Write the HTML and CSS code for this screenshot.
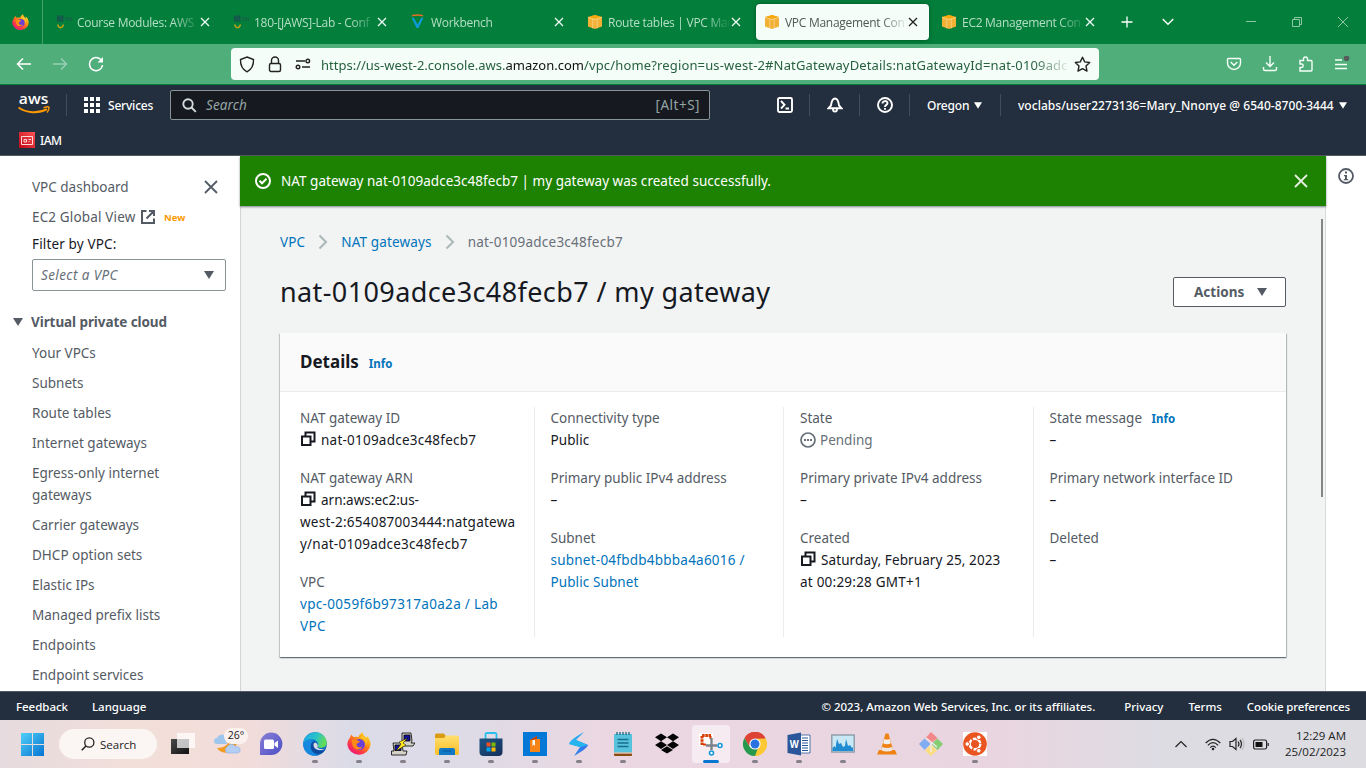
FILE: index.html
```html
<!DOCTYPE html>
<html lang="en">
<head>
<meta charset="utf-8">
<title>VPC Management Console</title>
<link rel="stylesheet" href="styles.css">
</head>
<body>
<svg class="defs" width="0" height="0">
  <defs>
    <linearGradient id="winG" x1="0" y1="0" x2="1" y2="1"><stop offset="0" stop-color="#4fd0fa"/><stop offset="1" stop-color="#0673d0"/></linearGradient>
    <linearGradient id="ffG" x1="1" y1="0" x2="0.2" y2="1"><stop offset="0" stop-color="#fff14a"/><stop offset="0.4" stop-color="#ff980e"/><stop offset="0.75" stop-color="#ff3647"/><stop offset="1" stop-color="#e31587"/></linearGradient>
    <linearGradient id="edgeG" x1="0" y1="0" x2="1" y2="0.3"><stop offset="0" stop-color="#1ba4e8"/><stop offset="0.6" stop-color="#2cc3c8"/><stop offset="1" stop-color="#61dc58"/></linearGradient>
    <linearGradient id="meetG" x1="0" y1="0" x2="1" y2="1"><stop offset="0" stop-color="#8b80d8"/><stop offset="1" stop-color="#4b4fc4"/></linearGradient>
    <linearGradient id="folG" x1="0" y1="0" x2="0" y2="1"><stop offset="0" stop-color="#ffdf70"/><stop offset="1" stop-color="#f9bd25"/></linearGradient>
    <linearGradient id="sG" x1="0" y1="0" x2="1" y2="1"><stop offset="0" stop-color="#28d2f2"/><stop offset="1" stop-color="#3a55e8"/></linearGradient>
    <linearGradient id="storeG" x1="0" y1="0" x2="1" y2="1"><stop offset="0" stop-color="#1e5687"/><stop offset="1" stop-color="#142f58"/></linearGradient>
    <linearGradient id="darkG" x1="0" y1="0" x2="1" y2="1"><stop offset="0" stop-color="#4a4a4a"/><stop offset="1" stop-color="#111"/></linearGradient>
    <linearGradient id="iamG" x1="0" y1="1" x2="1" y2="0"><stop offset="0" stop-color="#bd0816"/><stop offset="1" stop-color="#ff5252"/></linearGradient>
    <symbol id="firefox" viewBox="0 0 24 24">
      <path d="M2 7C3 6 3.300 4 4.600 2.400C5 4 6 4.600 7.500 5.200C9 4.700 10 4.800 11.500 5.200C12 3 13.600 1.400 15.600.3C15.800 3 18 4.500 19.600 5.700C20 5 20 4.300 20.300 4C22 6 23.600 9 23.600 12.600A11.700 11.400 0 0 1 .4 13C.4 10.500 1 8.600 2 7Z" fill="url(#ffG)"/>
      <circle cx="12.500" cy="12.500" r="5.400" fill="#6a3fd8"/>
      <path d="M4.500 8.500C7 6.800 9 7.800 10.500 8.500L13 9.500C12 11 10 11 9.500 12.500C9.600 15 13 16.500 15.500 14.500C14 18.800 6.500 18.500 5.500 13Z" fill="#ff8a16"/>
      <path d="M12 6.500C17 5.500 20 10 18.500 14C21.500 11 20 6 15.500 4Z" fill="#ffc629"/>
    </symbol>
    <symbol id="x" viewBox="0 0 10 10"><path d="M1 1 9 9M9 1 1 9" fill="none" stroke="currentColor" stroke-width="1.300"/></symbol>
    <symbol id="cube" viewBox="0 0 16 16"><path d="M1 3 8 1l7 2v9.500L8 15l-7-2.500Z" fill="#f2b034"/><path d="M1 3.200 8 5l7-1.800L8 1Z" fill="#f7a80d"/><path d="M1 3.500 8 5.500l7-2M5.800 5v9.500M10.200 5v9.500" fill="none" stroke="#f5e2b0" stroke-width=".6"/></symbol>
    <symbol id="jaws" viewBox="0 0 18 16"><path d="M1 1.500h6.500v6H1Z" fill="#17524f"/><path d="M2 3h1.500M5 2v4M2 6h2M3 1v2M6 5h2" stroke="#077f3c" stroke-width=".6" fill="none"/><path d="M9 4h7M9.500 6h6.500" stroke="#14624a" stroke-width="1.300" stroke-dasharray="2 .7"/><path d="M1.800 10.500C2.500 14.700 6.600 14.700 7.300 10.500" fill="none" stroke="#cba511" stroke-width="1.500"/></symbol>
    <symbol id="copy" viewBox="0 0 16 16"><path d="M5.500 5.500v-4h9v9h-4M2 5.500h8.500v8.500H2Z" fill="none" stroke="currentColor" stroke-width="2"/></symbol>
    <symbol id="tri" viewBox="0 0 10 8"><path d="M0 0h10L5 8Z" fill="currentColor"/></symbol>
    <symbol id="chev" viewBox="0 0 10 16"><path d="M1.500 1.500 8 8l-6.500 6.500" fill="none" stroke="#aab7b8" stroke-width="2"/></symbol>
  </defs>
</svg>

<header class="tabbar">
  <div class="fxview"><svg width="17" height="17"><use href="#firefox"/></svg></div>
  <nav class="tabs">
    <div class="tab"><svg width="18" height="16"><use href="#jaws"/></svg><span class="tabname">Course Modules: AWS</span><svg class="close" width="10" height="10"><use href="#x"/></svg></div>
    <div class="tab"><svg width="18" height="16"><use href="#jaws"/></svg><span class="tabname">180-[JAWS]-Lab - Conf</span><svg class="close" width="10" height="10"><use href="#x"/></svg></div>
    <div class="tab"><svg width="18" height="16" viewBox="0 0 18 16"><path d="M1.500 3.500 6.500 14h2l5-10.500-2.500.5-3.500 6.500L4 4Z" fill="#0c9bd8"/><path d="M2 1.800Q7.500.3 13 1.800" fill="none" stroke="#e66f24" stroke-width="1.400"/></svg><span class="tabname">Workbench</span><svg class="close" width="10" height="10"><use href="#x"/></svg></div>
    <div class="tab"><svg class="cube" width="16" height="16"><use href="#cube"/></svg><span class="tabname">Route tables | VPC Man</span><svg class="close" width="10" height="10"><use href="#x"/></svg></div>
    <div class="tab active"><svg class="cube" width="16" height="16"><use href="#cube"/></svg><span class="tabname">VPC Management Con</span><svg class="close" width="10" height="10"><use href="#x"/></svg></div>
    <div class="tab"><svg class="cube" width="16" height="16"><use href="#cube"/></svg><span class="tabname">EC2 Management Con</span><svg class="close" width="10" height="10"><use href="#x"/></svg></div>
  </nav>
  <svg class="plus" width="12" height="12" viewBox="0 0 12 12"><path d="M6 .5v11M.5 6h11" stroke="#fff" stroke-width="1.300"/></svg>
  <svg class="down" width="12" height="8" viewBox="0 0 12 8"><path d="m.7 1 5.300 5.300L11.300 1" fill="none" stroke="#fff" stroke-width="1.300"/></svg>
  <div class="winctl">
    <svg width="10" height="10" viewBox="0 0 10 10"><path d="M0 4.500h10"/></svg>
    <svg width="10" height="10" viewBox="0 0 10 10"><path d="M.5 2.500h7v7h-7ZM2.500 2.500v-2h7v7h-2"/></svg>
    <svg width="10" height="10" viewBox="0 0 10 10"><path d="m0 0 10 10M10 0 0 10"/></svg>
  </div>
</header>

<div class="toolbar">
  <div class="navbtns">
    <svg width="16" height="16" viewBox="0 0 16 16"><path d="M15 8H1.500M7 2.500 1.500 8 7 13.500"/></svg>
    <svg class="dim" width="16" height="16" viewBox="0 0 16 16"><path d="M1 8h13.500M9 2.500 14.500 8 9 13.500"/></svg>
    <svg width="16" height="16" viewBox="0 0 16 16"><path d="M14 5.500A6.500 6.500 0 1 0 14.500 9"/><path d="M15 1v5.500H9.500Z" class="solid"/></svg>
  </div>
  <div class="urlbar">
    <svg width="16" height="17" viewBox="0 0 16 17"><path d="M8 1 14.500 3.500C14.700 9 12.500 13.500 8 15.800 3.500 13.500 1.300 9 1.500 3.500Z"/></svg>
    <svg width="14" height="17" viewBox="0 0 14 17"><rect x="1.500" y="7.500" width="11" height="8" rx="1.500"/><path d="M3.500 7.500V4.500a3.500 3.500 0 0 1 7 0v3"/></svg>
    <svg width="16" height="12" viewBox="0 0 16 12"><path d="M1 3h9M7 9h8"/><circle cx="12.800" cy="3" r="1.800"/><circle cx="3" cy="9" r="1.800"/></svg>
    <span class="url">https://us-west-2.console.aws.<b>amazon.com</b><span class="path">/vpc/home?region=us-west-2#NatGatewayDetails:natGatewayId=nat-0109adc</span></span>
    <svg class="star" width="17" height="17" viewBox="0 0 17 17"><path d="m8.500 1.200 2.200 4.700 5 .6-3.700 3.500 1 5.100-4.500-2.500L4 15.100l1-5.100L1.300 6.500l5-.6Z" stroke-linejoin="round"/></svg>
  </div>
  <div class="toolicons">
    <svg width="16" height="16" viewBox="0 0 16 16"><path d="M2.500 2.500h11q1 0 1 1V7A6.500 6.500 0 0 1 1.500 7V3.500q0-1 1-1ZM4.700 6 8 9.200 11.300 6"/></svg>
    <svg width="16" height="16" viewBox="0 0 16 16"><path d="M8 0v10M4 6.500l4 4 4-4M1.500 11v2q0 1.500 1.500 1.500h10q1.500 0 1.500-1.500v-2"/></svg>
    <svg width="16" height="18" viewBox="0 0 16 18"><path d="M2 5.500h3.500V4a2 2 0 0 1 4 0v1.500h3.500q1 0 1 1V15q0 1-1 1H2v-3.500h1.500a1.700 1.700 0 0 0 0-3.500H2Z"/></svg>
    <svg width="16" height="16" viewBox="0 0 16 16"><path d="M1 4h7M1 8.500h12M1 12.500h12"/><circle cx="12.500" cy="2.300" r="2.800" fill="#555e5a" stroke="none"/></svg>
  </div>
</div>

<div class="awsnav">
  <div class="awsrow">
    <svg class="awslogo" width="34" height="24" viewBox="0 0 34 24"><text x="0.800" y="11.300" textLength="29.500" lengthAdjust="spacingAndGlyphs">aws</text><path d="M.5 14.500C8 20 20 21 29 16.200" fill="none" stroke="#f90" stroke-width="1.900"/><path d="M25.500 14.800Q30 13 31 14.300Q31.200 17 29 19.500" fill="none" stroke="#f90" stroke-width="1.400"/></svg>
    <i class="vsep s1"></i>
    <svg class="grid9" width="16" height="16" viewBox="0 0 16 16" fill="#fff"><path d="M0 0h4v4H0ZM6 0h4v4H6ZM12 0h4v4h-4ZM0 6h4v4H0ZM6 6h4v4H6ZM12 6h4v4h-4ZM0 12h4v4H0ZM6 12h4v4H6ZM12 12h4v4h-4Z"/></svg>
    <span class="navtxt services">Services</span>
    <div class="search"><svg width="15" height="15" viewBox="0 0 15 15"><circle cx="6" cy="6" r="4.700"/><path d="m9.500 9.500 4.300 4.300"/></svg><em>Search</em><span>[Alt+S]</span></div>
    <div class="awsright">
      <svg width="16" height="16" viewBox="0 0 16 16"><rect x="1" y="1" width="14" height="14" rx="1.500"/><path d="m4 4 3.500 3.800L4 11.500M8.500 11.500H12"/></svg>
      <i class="vsep"></i>
      <svg width="16" height="16" viewBox="0 0 16 16"><path d="M1.500 11.200h13L12 8.500C11.500 4.500 10 1.500 8 1.500S4.500 4.500 4 8.500ZM6 12c0 3.500 4 3.500 4 0"/></svg>
      <i class="vsep"></i>
      <svg width="16" height="16" viewBox="0 0 16 16"><circle cx="8" cy="8" r="7"/><path d="M5.500 6.500C5.500 3.300 10.500 3.300 10.500 6.300 10.500 8 8 7.800 8 10M8 11v1.700"/></svg>
      <i class="vsep"></i>
      <span class="navtxt oregon">Oregon</span><svg class="caret" width="8" height="7"><use href="#tri"/></svg>
      <i class="vsep s5"></i>
      <span class="navtxt user">voclabs/user2273136=Mary_Nnonye @ 6540-8700-3444</span><svg class="caret" width="8" height="7"><use href="#tri"/></svg>
    </div>
  </div>
  <div class="favrow"><svg width="16" height="16" viewBox="0 0 16 16"><path d="M0 0h16v16H0Z" fill="url(#iamG)"/><path d="M2.500 4.500h11v8h-11ZM5 7.500h2.500v2.500H5ZM9.500 7.500h2.500M9.500 9.500h1" fill="none" stroke="#ffd8d8"/></svg><span class="navtxt iam">IAM</span></div>
</div>

<div class="page">
  <aside class="side">
    <div class="siderow"><span class="dash">VPC dashboard</span><svg width="14" height="14" viewBox="0 0 14 14"><path d="m1 1 12 12M13 1 1 13" stroke="#545b64" stroke-width="1.800"/></svg></div>
    <div class="siderow ec2"><span>EC2 Global View</span><svg width="16" height="16" viewBox="0 0 16 16"><path d="M6.500 2H2v12h12V9.500M9 2h5v5M14 2 6.500 9.500" fill="none" stroke="#545b64" stroke-width="2"/></svg><b>New</b></div>
    <div class="filter">Filter by VPC:</div>
    <div class="select"><em>Select a VPC</em><svg width="10" height="8"><use href="#tri"/></svg></div>
    <div class="sect"><svg width="10" height="8"><use href="#tri"/></svg><b>Virtual private cloud</b></div>
    <ul class="links">
      <li>Your VPCs</li><li>Subnets</li><li>Route tables</li><li>Internet gateways</li><li>Egress-only internet<br>gateways</li><li>Carrier gateways</li><li>DHCP option sets</li><li>Elastic IPs</li><li>Managed prefix lists</li><li>Endpoints</li><li>Endpoint services</li>
    </ul>
  </aside>
  <main class="main">
    <div class="flash"><svg width="16" height="16" viewBox="0 0 16 16" fill="none" stroke="#fff" stroke-width="2"><circle cx="8" cy="8" r="7"/><path d="m4.500 7.800 2.500 2.500 4.500-4.500"/></svg><span>NAT gateway nat-0109adce3c48fecb7 | my gateway was created successfully.</span><svg width="14" height="14" viewBox="0 0 14 14"><path d="m1 1 12 12M13 1 1 13" stroke="#e6f0e2" stroke-width="1.800"/></svg></div>
    <div class="content">
      <div class="crumbs"><a>VPC</a><svg width="10" height="16"><use href="#chev"/></svg><a>NAT gateways</a><svg width="10" height="16"><use href="#chev"/></svg><span class="wide">nat-0109adce3c48fecb7</span></div>
      <div class="head"><h1>nat-0109adce3c48fecb7 / my gateway</h1><button class="actions"><span>Actions</span><svg width="10" height="8"><use href="#tri"/></svg></button></div>
      <section class="card">
        <div class="cardhead"><h2>Details</h2><a class="info">Info</a></div>
        <div class="cols">
          <dl>
            <dt>NAT gateway ID</dt><dd class="wide"><svg class="cp" width="16" height="16"><use href="#copy"/></svg>nat-0109adce3c48fecb7</dd>
            <dt>NAT gateway ARN</dt><dd class="wide"><svg class="cp" width="16" height="16"><use href="#copy"/></svg><span class="snug">arn:aws:ec2:us-</span><br>west-2:654087003444:natgatewa<br>y/nat-0109adce3c48fecb7</dd>
            <dt>VPC</dt><dd class="wider"><a>vpc-0059f6b97317a0a2a / Lab<br>VPC</a></dd>
          </dl>
          <dl>
            <dt>Connectivity type</dt><dd class="semi">Public</dd>
            <dt>Primary public IPv4 address</dt><dd>–</dd>
            <dt>Subnet</dt><dd><a><span class="wide">subnet-04fbdb4bbba4a6016 /</span><br><span class="semi">Public Subnet</span></a></dd>
          </dl>
          <dl>
            <dt>State</dt><dd class="pend"><svg class="cp" width="16" height="16" viewBox="0 0 16 16"><circle cx="8" cy="8" r="7" fill="none" stroke="#687078" stroke-width="1.700"/><path d="M4 7h2v2H4ZM7 7h2v2H7ZM10 7h2v2h-2Z" fill="#687078"/></svg>Pending</dd>
            <dt>Primary private IPv4 address</dt><dd>–</dd>
            <dt>Created</dt><dd><svg class="cp" width="16" height="16"><use href="#copy"/></svg><span class="semi">Saturday, February 25, 2023</span><br><span class="wide">at 00:29:28 GMT+1</span></dd>
          </dl>
          <dl>
            <dt>State message <a class="info">Info</a></dt><dd>–</dd>
            <dt>Primary network interface ID</dt><dd>–</dd>
            <dt>Deleted</dt><dd>–</dd>
          </dl>
        </div>
      </section>
      <i class="thumb"></i>
    </div>
  </main>
  <aside class="tools"><svg width="16" height="16" viewBox="0 0 16 16"><circle cx="8" cy="8" r="7" fill="none" stroke="#545b64" stroke-width="1.800"/><path d="M7 3.500h2v2H7ZM6 7h3v4h1.200v1.300H5.800V11H7V8.300H6Z" fill="#545b64"/></svg></aside>
</div>

<footer class="foot"><span class="fb">Feedback</span><span class="lang">Language</span><span class="copyr">© 2023, Amazon Web Services, Inc. or its affiliates.</span><span>Privacy</span><span>Terms</span><span>Cookie preferences</span></footer>

<div class="taskbar">
  <svg class="win" width="23" height="23" viewBox="0 0 23 23"><path d="M0 0h11v11H0ZM12 0h11v11H12ZM0 12h11v11H0ZM12 12h11v11H12Z" fill="url(#winG)"/></svg>
  <div class="pill"><svg width="14" height="14" viewBox="0 0 14 14"><circle cx="8.300" cy="5.500" r="4.600" fill="none" stroke="#222" stroke-width="1.300"/><path d="m5 9-4.300 4.300" stroke="#222" stroke-width="1.500"/></svg><span>Search</span></div>
  <svg class="tview" width="24" height="24" viewBox="0 0 24 24"><path d="M0 7h18v15H0Z" fill="url(#darkG)"/><path d="M6 1h18v15H6Z" fill="#fff" opacity=".72"/></svg>
  <div class="weather"><svg width="28" height="26" viewBox="0 0 28 26"><path d="M21 5A10.500 10.500 0 1 1 3 17Q14 18 17 5Z" fill="#f49b24"/><path d="M3 13a3 3 0 0 1 0-6 5 5 0 0 1 9-1l1 7Z" fill="#9fc6ec"/><path d="M13 22a3.500 3.500 0 0 1 0-6 5 5 0 0 1 9 0 3 3 0 0 1 2 6Z" fill="#b3cef2" stroke="#8cb0e2" stroke-width=".6"/></svg><span>26°</span></div>
  <div class="apps">
    <div class="app"><svg viewBox="0 0 24 24"><path d="M1 23V12A11.200 11.200 0 1 1 12 23Z" fill="url(#meetG)"/><rect x="5" y="7.500" width="10" height="9.500" rx="1.500" fill="#fff"/><path d="m15.500 11 3.500-2.500v7.500l-3.500-2.500Z" fill="#fff"/></svg></div>
    <div class="app dot"><svg viewBox="0 0 24 24"><circle cx="12" cy="12" r="11.800" fill="#0d67c0"/><path d="M.3 12C.3-2 22-4.500 23.800 10.500 24 16 17 17 14.500 14.800 16.500 12 14 7.500 9 7.500 5 7.500 1.500 9.500.3 12Z" fill="url(#edgeG)"/><path d="M.3 12C2 6.500 8 7 10.500 8.700 5 12 8 22 16 23 6 26 0 19 .3 12Z" fill="#1689df"/><path d="M10.500 12C10 17 15 20.500 22 17.800 18 25 7.500 22 7.800 14.500 8 11.500 10 9.500 12 9.800 10.800 10.500 10.600 11.200 10.500 12Z" fill="#104a9c"/><path d="M10.700 11.500C9.500 17 16 20 22.500 16.500 19 18 13.500 16.500 14.500 14.500 15.500 13 13 9 10.700 11.500Z" fill="#dedbe7"/></svg></div>
    <div class="app dot"><svg viewBox="0 0 24 24"><use href="#firefox"/></svg></div>
    <div class="app dot"><svg viewBox="0 0 24 24"><g stroke="#000" stroke-width=".8"><path d="M11 1h9l1 8-1 2h4l-2 3H12l-1-4Z" fill="#d5d2c8"/><path d="M2 11h9l1 8h4l-1 4H.5v-4H3Z" fill="#d5d2c8"/><path d="M13 3h6v6h-6ZM4 13h6v5.500H4Z" fill="#11119d"/><path d="m17 6-9 4 2 2-5 7 10-6-3-2Z" fill="#ffe51a" stroke-width=".5"/></g></svg></div>
    <div class="app dot"><svg viewBox="0 0 24 24"><path d="M0 3q0-1.500 1.500-1.500H9l2 3v3H0Z" fill="#dc9a12"/><path d="M0 6h9l2-2.500h11q2 0 2 2V21q0 2-2 2H2q-2 0-2-2Z" fill="url(#folG)"/><path d="M4 23v-5q0-2 2-2h12q2 0 2 2v5Z" fill="#1178c4"/><path d="M8 19h8" stroke="#0a5799"/></svg></div>
    <div class="app dot"><svg viewBox="0 0 24 24"><path d="M6.500 8V2.500Q6.500 1 8 1h8q1.500 0 1.500 1.500V8" fill="none" stroke="#29bfed" stroke-width="1.800"/><path d="M.5 6.500h23V20q0 4-4 4h-15q-4 0-4-4Z" fill="url(#storeG)"/><path d="M7.500 10.500h4v4h-4Z" fill="#f25022"/><path d="M12.500 10.500h4v4h-4Z" fill="#7fba00"/><path d="M7.500 15.500h4v4h-4Z" fill="#00a4ef"/><path d="M12.500 15.500h4v4h-4Z" fill="#ffb900"/></svg></div>
    <div class="app dot"><svg viewBox="0 0 24 24"><path d="M0 0h24v24H0Z" fill="#0478d7"/><path d="m7 8 7-4v3h3v13H7Z" fill="#f68416"/><path d="m7 8 7-4v3l-5 1Z" fill="#bf3a10"/><path d="M9.500 8h2.500v6l-1.200-1.500L9.500 14Z" fill="#fff"/></svg></div>
    <div class="app dot"><svg viewBox="0 0 24 24"><path d="M17 0C10 4 3 8 2 12L13 15 7 24C14 20 20 16 21 13L9 8Z" fill="url(#sG)"/><path d="M2 12 9 8l12 5-8 2Z" fill="#25b6ef"/></svg></div>
    <div class="app dot"><svg viewBox="0 0 24 24"><path d="M3 2h18v19H3Z" fill="#57c2dc"/><path d="M3 20.500h18V23q0 1-1 1H4q-1 0-1-1Z" fill="#8b4a12"/><path d="M3 20.500h18v1H3Z" fill="#fff"/><path d="M6 0v3M9 0v3M12 0v3M15 0v3M18 0v3" stroke="#176981" stroke-width="1.300"/><path d="M6.500 7.500h11M6.500 11h11M6.500 14.500h11" stroke="#176f8b" stroke-width="1.500"/></svg></div>
    <div class="app"><svg viewBox="0 0 24 24"><path d="m6 1.500 6 3.800L6 9.200 0 5.300ZM18 1.500l6 3.800-6 3.900-6-3.900ZM6 9.200l6 3.800-6 3.900-6-3.900ZM18 9.200l6 3.800-6 3.900-6-3.900ZM12 14.200l6 3.700-6 3.700-6-3.700Z" fill="#050505"/></svg></div>
    <div class="app sel"><svg viewBox="0 0 24 24"><path d="M0 1h14v13H0Z" fill="#fff"/><path d="M3 13V3.500h9" fill="none" stroke="#d83b01" stroke-width="3" stroke-dasharray="2.600 .6"/><path d="M11.500 4v3M4 12.500h3" stroke="#d83b01" stroke-width="2"/><path d="M12.500 6v12M7 13.500h11" stroke="#7b8388" stroke-width="2.400"/><circle cx="12.500" cy="21" r="2" fill="#fff" stroke="#1398d8" stroke-width="1.600"/><circle cx="21" cy="13.500" r="2" fill="#fff" stroke="#1398d8" stroke-width="1.600"/></svg></div>
    <div class="app dot"><svg viewBox="0 0 24 24"><path d="M1.600 6A12 12 0 0 1 22.400 6L12 12Z" fill="#dc4334"/><path d="M22.400 6A12 12 0 0 1 12 24L9 20 13 12V6.500Z" fill="#fcc934"/><path d="M12 24A12 12 0 0 1 1.600 6l6 10 7 1Z" fill="#27994c"/><path d="M12 6.500h10.600A12 12 0 0 0 1.600 6L6 13.500Z" fill="#dc4334"/><circle cx="12" cy="12" r="5.600" fill="#fff"/><circle cx="12" cy="12" r="4.500" fill="#2972df"/></svg></div>
    <div class="app dot"><svg viewBox="0 0 24 24"><path d="M11 3h12v18H11Z" fill="#fff" stroke="#2b579a" stroke-width=".8"/><path d="M15 6h6M15 8.500h6M15 11h6M15 13.500h6M15 16h6M15 18.500h6" stroke="#2b579a"/><path d="M.5 3 14 .5v23L.5 21Z" fill="#2b579a"/><text class="w" x="2.800" y="16" textLength="9" lengthAdjust="spacingAndGlyphs">W</text></svg></div>
    <div class="app dot"><svg viewBox="0 0 24 24"><rect x=".8" y="3" width="22.400" height="17" fill="#c8e8f5" stroke="#8a9ba7" stroke-width="1.400"/><path d="M1.500 19v-3l2-2 1 2 1.500-9 2 5 2-1 2 4 2-1 1-7 2 7 2-1 2 3 1-1v4Z" fill="#1f8bd0"/></svg></div>
    <div class="app"><svg viewBox="0 0 24 24"><path d="M4 18h16l2 4.500H2Z" fill="#ef8213"/><path d="M10.500 1.500h3l5 18q-6.500 3-13 0Z" fill="#f18316"/><path d="m9.200 7-1.100 4.200q4 2 7.800 0L14.800 7q-3 1-5.600 0Z" fill="#f1eeee"/><path d="m7 15-1 3q6 3 12 0l-1-3q-5 2-10 0Z" fill="#ebe7e6"/></svg></div>
    <div class="app"><svg viewBox="0 0 24 24"><path d="m12 0 6.500 6-6.500 5.500L6.500 6Z" fill="#f3878a"/><path d="m5.500 6.500 6 5.500-6 6-5.500-6Z" fill="#82acf2"/><path d="m18.500 6.500 5.500 5.500-5.500 6-6-6Z" fill="#86cc72"/><path d="m12 12.500 6 6L12 24l-6-5.500Z" fill="#fbdc83"/><path d="m7 6 5 4 6 5M12 10v10" stroke="#edeef2" stroke-width="1.300" fill="none"/></svg></div>
    <div class="app dot"><svg viewBox="0 0 24 24"><path d="M0 0h24v24H0Z" fill="#fff"/><circle cx="12" cy="12" r="11.800" fill="#e95420"/><circle cx="12" cy="12" r="5.300" fill="none" stroke="#fff" stroke-width="2.400" stroke-dasharray="9.600 1.500"/><g fill="#fff" stroke="#e95420"><circle cx="4.200" cy="12" r="2.300"/><circle cx="15.800" cy="5.300" r="2.300"/><circle cx="15.800" cy="18.700" r="2.300"/></g></svg></div>
  </div>
  <div class="tray">
    <svg width="12" height="8" viewBox="0 0 12 8"><path d="m.5 7 5.500-5.500L11.500 7"/></svg>
    <svg class="wifi" width="16" height="13" viewBox="0 0 16 13"><path d="M.7 5Q8-2.300 15.300 5M2.900 7.300Q8 2 13.100 7.300M5.200 9.600Q8 6.700 10.800 9.600"/><circle cx="8" cy="11" r="1.300" fill="#222" stroke="none"/></svg>
    <svg class="vol" width="16" height="14" viewBox="0 0 16 14"><path d="M1 4.500h2.500L7 1.500v11l-3.500-3H1ZM9 4.500q2 2.500 0 5M11 2.800q3 4.200 0 8.400"/><path d="M13 1q4 6 0 12" stroke="#bbb"/></svg>
    <svg class="bat" width="16" height="11" viewBox="0 0 16 11"><rect x=".6" y="1" width="13" height="9" rx="1.800"/><path d="M2.500 3h7v5h-7Z" fill="#111" stroke="none"/><path d="M15.200 4v3"/></svg>
    <div class="clock">12:29 AM<br>25/02/2023</div>
  </div>
</div>
</body>
</html>
```
FILE: styles.css
```css
* { box-sizing: border-box; }
body { margin: 0; width: 1366px; height: 768px; overflow: hidden; font-family: "Noto Sans", "Open Sans", sans-serif; font-size: 13.5px; line-height: 22px; color: #16191f; background: #fff; display: flex; flex-direction: column; }
svg { flex: none; display: block; }
.defs { position: absolute; }
a { color: #0073bb; }
b { font-weight: 700; }
.wide { letter-spacing: .23px; }
.wider { letter-spacing: .32px; }
.semi { letter-spacing: .1px; }
.snug { letter-spacing: 0; }

.tabbar { height: 44px; background: #047f3b; display: flex; align-items: center; flex: none; }
.fxview { width: 43px; height: 44px; border-right: 1px solid #45a069; display: flex; align-items: center; padding-left: 12px; }
.tabs { display: flex; gap: 4px; padding-left: 5px; }
.tab { width: 173px; height: 36px; display: flex; align-items: center; padding-left: 8px; color: #b5dfc6; border-radius: 4px; }
.tab .cube { margin-right: 2px; }
.tabname { width: 121px; margin-left: 3px; padding-top: 1px; font-family: "Open Sans", sans-serif; font-size: 12px; letter-spacing: -.28px; white-space: nowrap; -webkit-mask-image: linear-gradient(90deg, #000 80%, transparent 102%); mask-image: linear-gradient(90deg, #000 80%, transparent 102%); }
.tab .close { margin-left: 2px; color: #f0faf4; }
.tab.active { background: #f5fdf8; color: #4d5a53; box-shadow: 0 0 4px #02522a; }
.tab.active .close { color: #222; }
.plus { margin-left: 15px; }
.down { margin-left: 29px; }
.winctl { display: flex; gap: 36px; margin-left: 72px; }
.winctl svg { fill: none; stroke: #8cc8a5; stroke-width: 1; }

.toolbar { height: 41px; background: #50ae7b; border-bottom: 1px solid #047f3b; display: flex; align-items: center; flex: none; }
.navbtns { display: flex; gap: 20px; padding-left: 16px; width: 231px; }
.navbtns svg { fill: none; stroke: #fff; stroke-width: 1.500; }
.navbtns .dim { opacity: .4; }
.navbtns .solid { fill: #fff; stroke: none; }
.urlbar { width: 868px; height: 32px; background: #f5fdf8; border-radius: 4px; display: flex; align-items: center; padding-left: 8px; }
.urlbar svg { fill: none; stroke: #222; stroke-width: 1.400; }
.urlbar svg + svg { margin-left: 13px; }
.url { width: 750px; margin-left: 10px; padding-top: 1px; font-size: 13px; letter-spacing: 0; color: #27613f; white-space: nowrap; -webkit-mask-image: linear-gradient(90deg, #000 95%, transparent); mask-image: linear-gradient(90deg, #000 95%, transparent); }
.url b { font-weight: 400; color: #111; }
.path { letter-spacing: .15px; }
.urlbar .star { margin-left: 3px; }
.toolicons { display: flex; align-items: center; gap: 20px; margin-left: 127px; }
.toolicons svg { fill: none; stroke: #f5fff8; stroke-width: 1.400; }

.awsnav { height: 71px; background: #232f3e; border-bottom: 1px solid #545b64; flex: none; color: #fff; }
.awsrow { height: 40px; display: flex; align-items: center; }
.awslogo { margin-left: 18px; }
.awslogo text { font: 600 15px "Open Sans", sans-serif; fill: #fff; }
.vsep { width: 1px; height: 22px; background: #414d5c; flex: none; }
.s1 { margin-left: 14px; }
.grid9 { margin-left: 17px; }
.navtxt { font-size: 12px; font-weight: 500; white-space: nowrap; padding-top: 2px; letter-spacing: -.2px; }
.services { width: 62px; margin-left: 8px; }
.search { width: 540px; height: 30px; background: #16191f; border: 1px solid #879596; border-radius: 2px; display: flex; align-items: center; padding: 0 9px 0 11px; color: #95a5a6; }
.search svg { fill: none; stroke: #d5dbdb; stroke-width: 1.900; }
.search em { margin-left: 9px; flex: 1; letter-spacing: .1px; }
.search span { letter-spacing: .5px; }
.awsright { display: flex; align-items: center; margin-left: 67px; }
.awsright svg { fill: none; stroke: #fff; stroke-width: 1.900; }
.awsright .vsep { margin: 0 17px 0 16px; }
.oregon { width: 42px; }
.user { letter-spacing: .03px; width: 316px; }
.awsright .caret { margin-left: 5px; stroke: none; }
.awsright .s5 { margin: 0 17px 0 18px; }
.favrow { display: flex; align-items: center; gap: 5px; height: 30px; padding-left: 19px; }
.iam { letter-spacing: -.5px; }

.page { height: 535px; display: flex; flex: none; }
.side { width: 240px; background: #fff; padding-top: 20px; color: #545b64; overflow: hidden; }
.siderow { display: flex; align-items: center; padding-left: 32px; height: 22px; }
.siderow .dash { width: 172px; }
.ec2 { margin-top: 8px; }
.ec2 span { letter-spacing: .15px; width: 103px; white-space: nowrap; }
.ec2 svg { margin-left: 5px; }
.ec2 b { font-size: 9.500px; color: #ff9900; margin-left: 8px; padding-top: 2px; }
.filter { color: #16191f; padding-left: 32px; margin-top: 5px; letter-spacing: .15px; }
.select { margin: 4px 0 0 32px; width: 194px; height: 32px; border: 1px solid #879596; border-radius: 2px; display: flex; align-items: center; justify-content: space-between; padding: 0 11px 0 8px; }
.select em { color: #687078; letter-spacing: .4px; }
.sect { display: flex; align-items: center; gap: 8px; height: 22px; padding-left: 13px; margin-top: 20px; letter-spacing: -.08px; }
.links { list-style: none; margin: 9px 0 0; padding: 0 0 0 32px; }
.links li { margin-bottom: 8px; white-space: nowrap; }

.main { width: 1086px; background: #f2f3f3; border-left: 1px solid #cfd4d6; border-right: 1px solid #d5dbdb; flex: none; }
.flash { height: 50px; width: 1086px; margin-left: -1px; background: #1d8102; box-shadow: 0 1px 2px rgba(0,28,36,.5); display: flex; align-items: center; color: #fff; padding-left: 15px; letter-spacing: .03px; position: relative; }
.flash span { margin-left: 10px; width: 1013px; white-space: nowrap; }
.content { padding: 25px 39px 0; height: 485px; position: relative; }
.crumbs { display: flex; align-items: center; height: 22px; color: #687078; white-space: nowrap; }
.crumbs a { letter-spacing: .15px; }
.crumbs svg { margin: 0 13px; }
.head { display: flex; align-items: center; justify-content: space-between; height: 36px; margin-top: 21px; }
h1 { margin: 0; font-size: 27px; font-weight: 400; line-height: 36px; letter-spacing: .39px; white-space: nowrap; }
.actions { width: 113px; height: 30px; margin: 0; background: #fff; border: 1px solid #545b64; border-radius: 2px; font: 700 13.500px/20px "Noto Sans", sans-serif; color: #545b64; display: flex; align-items: center; padding: 0 18px 0 20px; justify-content: space-between; }
.card { width: 1006px; height: 324px; margin-top: 23px; background: #fff; box-shadow: 0 1px 1px rgba(0,28,36,.4), 1px 1px 1px rgba(0,28,36,.2), -1px 1px 1px rgba(0,28,36,.15); }
.cardhead { height: 59px; background: #fafafa; border-bottom: 1px solid #eaeded; display: flex; align-items: center; padding-left: 20px; }
h2 { margin: 0; font-size: 17px; font-weight: 700; }
.info { font-size: 11.500px; font-weight: 700; line-height: 1; }
.cardhead .info { margin: 3px 0 0 10px; }
.cols { display: grid; grid-template-columns: 234px 249px 250px 233px; padding: 15px 20px 0; }
dl { margin: 0; height: 230px; }
dl + dl { border-left: 1px solid #eaeded; padding-left: 15.500px; }
dl:nth-child(3) { padding-left: 16px; }
dt { color: #545b64; white-space: nowrap; height: 22px; }
dt .info { margin-left: 6px; }
dd { margin: 0 0 16px; white-space: nowrap; }
.pend { color: #687078; }
.cp { display: inline-block; vertical-align: -2px; margin-right: 5px; }
.pend .cp { margin-right: 4px; vertical-align: -3px; }
.thumb { position: absolute; right: 2px; top: 13px; width: 2px; height: 278px; background: #858585; }
.tools { width: 40px; padding: 12px 0 0 12px; }

.foot { height: 29px; background: #232f3e; border-top: 1px solid #545b64; color: #fff; font-size: 11.500px; font-weight: 500; letter-spacing: -.03px; display: flex; align-items: center; padding: 2px 16px 0 16px; gap: 25px; flex: none; white-space: nowrap; }
.foot .fb { width: 51px; }
.foot .copyr { margin-left: auto; margin-right: 4px; }
.foot span:last-child { letter-spacing: -.15px; }

.taskbar { height: 48px; display: flex; align-items: center; background: linear-gradient(90deg, #e6dbdf 0, #f3dfd9 140px, #f1dcda 250px, #dbdbe8 350px, #dedbe6 470px, #ead7e1 600px, #e9d5df 1000px, #dddce3 1160px, #dcdce1); flex: none; }
.win { margin-left: 21px; }
.pill { width: 98px; height: 30px; margin-left: 15px; border-radius: 15px; background: #fbf5f4; display: flex; align-items: center; padding-left: 22px; gap: 5px; font: 11.500px "Open Sans", sans-serif; color: #222; }
.tview { margin-left: 14px; }
.weather { width: 35px; height: 32px; margin-left: 18px; position: relative; padding-top: 3px; margin-right: 1px; }
.weather svg { margin-left: 1px; }
.weather span { position: absolute; left: 11px; top: 0; width: 24px; height: 16px; border-radius: 8px; background: #fbf2ef; font: 10.500px/15px "Open Sans", sans-serif; text-align: center; }
.apps { display: flex; }
.app { width: 38px; height: 38px; margin: 0 3px; display: flex; justify-content: center; padding-top: 7px; border-radius: 4px; position: relative; }
.app svg { width: 24px; height: 24px; }
.app.sel { background: #f6ebf0; }
.dot::after, .sel::after { content: ""; position: absolute; top: 35px; width: 6px; height: 3px; border-radius: 2px; background: #85808a; }
.sel::after { width: 16px; background: #0877d2; }
.w { font: 700 11px "Noto Sans", sans-serif; fill: #fff; }
.tray { display: flex; align-items: center; margin-left: auto; padding-right: 20px; }
.tray svg { fill: none; stroke: #222; stroke-width: 1.200; }
.wifi { margin-left: 18px; }
.vol { margin-left: 8px; }
.bat { margin-left: 8px; }
.clock { width: 71px; margin-left: 6px; font: 11.500px/16px "Open Sans", sans-serif; text-align: right; color: #222; }
```
